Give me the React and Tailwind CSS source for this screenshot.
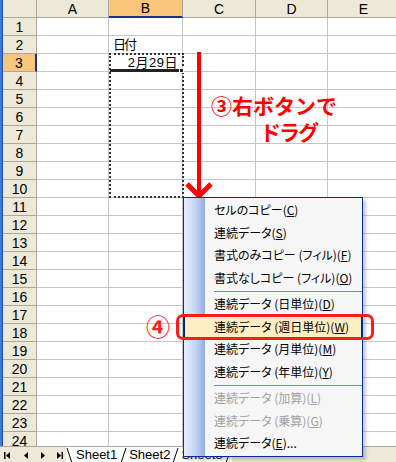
import React from 'react';

const cols = ['A', 'B', 'C', 'D', 'E'];
const colW = ['w-[72px]', 'w-[74px]', 'w-[73px]', 'w-[72px]', 'w-[72px]'];
const rows = Array.from({ length: 24 }, (_, i) => i + 1);

const menu = [
    { label: 'セルのコピー', key: 'C' },
    { label: '連続データ', key: 'S' },
    { label: '書式のみコピー (フィル)', key: 'F' },
    { label: '書式なしコピー (フィル)', key: 'O' },
    { sep: true },
    { label: '連続データ (日単位)', key: 'D' },
    { label: '連続データ (週日単位)', key: 'W', active: true },
    { label: '連続データ (月単位)', key: 'M' },
    { label: '連続データ (年単位)', key: 'Y' },
    { sep: true },
    { label: '連続データ (加算)', key: 'L', disabled: true },
    { label: '連続データ (乗算)', key: 'G', disabled: true },
    { label: '連続データ', key: 'E', tail: '...' },
];

const Cell = ({ row, col }) => {
    let content = null;
    if (col === 'B' && row === 2) content = <span className="pl-[4px] tracking-[-2px]">日付</span>;
    if (col === 'B' && row === 3)
        content = <span className="ml-auto pr-[4px] tracking-[0.5px]">2月29日</span>;
    return (
        <div className={`${colW[cols.indexOf(col)]} h-[18px] shrink-0 flex items-center bg-white border-r border-b border-[#c6c6c6] text-[13px] leading-none text-black`}>
            {content}
        </div>
    );
};

const NavIcons = () => (
    <svg width="66" height="16" viewBox="0 0 66 16" className="shrink-0">
        <rect x="4" y="5" width="1.5" height="7" fill="#000" />
        <path d="M10 5 L6 8.5 L10 12 Z" fill="#000" />
        <path d="M28 5 L24 8.5 L28 12 Z" fill="#000" />
        <path d="M41 5 L45 8.5 L41 12 Z" fill="#000" />
        <path d="M57 5 L61 8.5 L57 12 Z" fill="#000" />
        <rect x="61.5" y="5" width="1.5" height="7" fill="#000" />
    </svg>
);

const Slash = ({ back }) => (
    <svg width="7" height="16" viewBox="0 0 7 16" className="shrink-0">
        {back ? <line x1="1" y1="1" x2="6" y2="16" stroke="#000" /> : <line x1="6" y1="1" x2="1" y2="16" stroke="#000" />}
    </svg>
);

export default function App() {
    return (
        <div className="relative w-[396px] h-[462px] overflow-hidden bg-white font-['Liberation_Sans','Noto_Sans_CJK_JP',sans-serif]">
            {/* sheet grid */}
            <div className="flex h-[446px] overflow-hidden">
                <div className="w-[3px] shrink-0 bg-[#3c78d8] border-r border-[#1c4fa8]" />
                <div className="flex flex-col">
                    <div className="flex">
                        <div className="w-[34px] h-[18px] shrink-0 bg-[#ece9d8] border-r border-b border-[#aca899]" />
                        {cols.map((c, i) => (
                            <div
                                key={c}
                                className={`${colW[i]} h-[18px] shrink-0 flex items-center justify-center text-[14px] leading-none border-r ${c === 'B' ? 'bg-[#f8c57b] border-b-2 border-b-[#1b2f8a] border-r-[#aca899]' : 'bg-[#ece9d8] border-b border-[#aca899]'}`}
                            >
                                {c}
                            </div>
                        ))}
                    </div>
                    {rows.map((r) => (
                        <div key={r} className="flex">
                            <div
                                className={`w-[34px] h-[18px] shrink-0 flex items-center justify-center text-[14px] leading-none border-b border-[#aca899] ${r === 3 ? 'bg-[#f8c57b] border-r-2 border-r-[#1b2f8a]' : 'bg-[#ece9d8] border-r'}`}
                            >
                                {r}
                            </div>
                            {cols.map((c) => (
                                <Cell key={c} row={r} col={c} />
                            ))}
                        </div>
                    ))}
                </div>
            </div>

            {/* sheet tabs */}
            <div className="flex items-center h-[16px] bg-[#ece9d8] border-t border-[#aca899] text-[13px] leading-none">
                <NavIcons />
                <div className="flex items-center h-full bg-white">
                    <Slash back />
                    <span className="px-[3px]">Sheet1</span>
                    <Slash />
                    <span className="px-[2px]">Sheet2</span>
                    <Slash />
                    <span className="px-[2px]">Sheet3</span>
                    <Slash />
                </div>
            </div>

            {/* marching ants selection */}
            <div className="absolute left-[109px] top-[53px] w-[75px] h-[145px] border-2 border-dotted border-[#333]" />
            <div className="absolute left-[110px] top-[69px] w-[70px] h-[3px] bg-[#222]" />
            <div className="absolute left-[179px] top-[68px] w-[5px] h-[5px] bg-[#222] border border-white" />

            {/* red drag arrow */}
            <svg className="absolute left-[180px] top-[48px]" width="40" height="154" viewBox="0 0 40 154">
                <line x1="19" y1="4" x2="19" y2="146" stroke="#ff0000" strokeWidth="4" />
                <polyline points="7,136 19,148 31,136" fill="none" stroke="#ff0000" strokeWidth="5" />
            </svg>
            <div className="absolute left-[211px] top-[92px] text-[21px] leading-[26px] font-bold text-[#ff0000] font-['Noto_Sans_CJK_JP',sans-serif]">
                <div>③右ボタンで</div>
                <div className="pl-[49px] tracking-[-2px]">ドラグ</div>
            </div>

            {/* context menu */}
            <div className="absolute left-[183px] top-[197px] w-[180px] border border-[#002d96] pt-[1px] pb-[1px] shadow-[3px_3px_3px_rgba(80,90,120,0.3)] bg-[linear-gradient(to_right,#e6eefb_0px,#c2d4f3_12px,#8eace3_21px,#f6f6f6_21px)] font-['Noto_Sans_CJK_JP',sans-serif] text-[12px] leading-none [font-feature-settings:'palt']">
                {menu.map((m, i) =>
                    m.sep ? (
                        <div key={i} className="h-[4px] flex items-center pl-[30px]">
                            <div className="h-px w-full bg-[#6a8ccb]" />
                        </div>
                    ) : (
                        <div
                            key={i}
                            className={`h-[22.5px] flex items-center ${m.active ? 'bg-[#ffeec2] border border-[#0a246a] pl-[29px]' : 'pl-[30px]'} ${m.disabled ? 'text-[#a0a0a0]' : 'text-black'}`}
                        >
                            {m.label}(<u>{m.key}</u>){m.tail}
                        </div>
                    )
                )}
            </div>

            {/* step 4 highlight */}
            <div className="absolute left-[176px] top-[314px] w-[198px] h-[26px] rounded-[7px] border-[3px] border-[#ff1a1a]" />
            <div className="absolute left-[146px] top-[312px] text-[24px] leading-[28px] font-bold text-[#ff1a1a] font-['Noto_Sans_CJK_JP',sans-serif]">
                ④
            </div>
        </div>
    );
}
